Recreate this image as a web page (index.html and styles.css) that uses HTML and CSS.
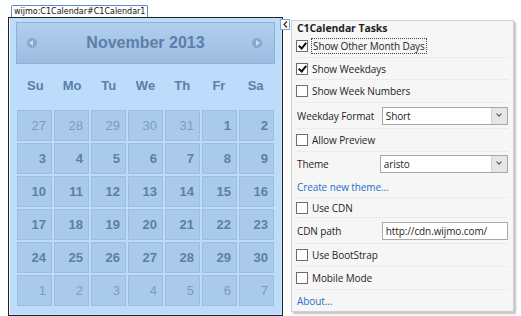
FILE: index.html
```html
<!DOCTYPE html>
<html lang="en">
<head>
    <meta charset="UTF-8">
    <title>C1Calendar Designer</title>
    <link rel="stylesheet" href="styles.css">
</head>
<body>
<div class="stage">
    <div class="designer">
        <div class="tag">wijmo:C1Calendar#C1Calendar1</div>
        <div class="frame">
            <div class="calendar">
                <div class="cal-header">
                    <span class="nav-btn prev"></span>
                    <span class="cal-title">November 2013</span>
                    <span class="nav-btn next"></span>
                </div>
                <div class="weekdays">
                    <span>Su</span><span>Mo</span><span>Tu</span><span>We</span><span>Th</span><span>Fr</span><span>Sa</span>
                </div>
                <div class="days">
                    <span class="other">27</span><span class="other">28</span><span class="other">29</span><span class="other">30</span><span class="other">31</span><span>1</span><span>2</span>
                    <span>3</span><span>4</span><span>5</span><span>6</span><span>7</span><span>8</span><span>9</span>
                    <span>10</span><span>11</span><span>12</span><span>13</span><span>14</span><span>15</span><span>16</span>
                    <span>17</span><span>18</span><span>19</span><span>20</span><span>21</span><span>22</span><span>23</span>
                    <span>24</span><span>25</span><span>26</span><span>27</span><span>28</span><span>29</span><span>30</span>
                    <span class="other">1</span><span class="other">2</span><span class="other">3</span><span class="other">4</span><span class="other">5</span><span class="other">6</span><span class="other">7</span>
                </div>
            </div>
        </div>
    </div>

    <div class="collapse">
        <svg width="5" height="7" viewBox="0 0 5 7"><path d="M4 0.5 L1 3.5 L4 6.5" fill="none" stroke="#333" stroke-width="1.3"/></svg>
    </div>

    <div class="tasks">
        <div class="tasks-title">C1Calendar Tasks</div>
        <div class="task-row">
            <span class="check checked"></span><span class="focused">Show Other Month Days</span>
        </div>
        <div class="task-row short">
            <span class="check checked"></span><span>Show Weekdays</span>
        </div>
        <div class="task-row">
            <span class="check"></span><span>Show Week Numbers</span>
        </div>
        <div class="task-row field">
            <span class="field-label">Weekday Format</span>
            <span class="combo">Short<span class="drop"></span></span>
        </div>
        <div class="task-row">
            <span class="check"></span><span>Allow Preview</span>
        </div>
        <div class="task-row theme-row no-line">
            <span class="field-label">Theme</span>
            <span class="combo theme-combo">aristo<span class="drop"></span></span>
        </div>
        <div class="task-row short">
            <a href="#" class="task-link">Create new theme...</a>
        </div>
        <div class="task-row tight">
            <span class="check"></span><span>Use CDN</span>
        </div>
        <div class="task-row field">
            <span class="field-label">CDN path</span>
            <span class="combo">http://cdn.wijmo.com/</span>
        </div>
        <div class="task-row">
            <span class="check"></span><span>Use BootStrap</span>
        </div>
        <div class="task-row">
            <span class="check"></span><span>Mobile Mode</span>
        </div>
        <div class="task-row short no-line">
            <a href="#" class="task-link">About...</a>
        </div>
    </div>
</div>
</body>
</html>
```

FILE: styles.css
```css
body {
    margin: 0;
    background-color: #fff;
    font-family: "Liberation Sans", Arial, sans-serif;
}

.stage {
    display: flex;
    align-items: flex-start;
    padding: 5px 0 0 8px;
}

/* design-time frame */
.designer {
    width: 275px;
    display: flex;
    flex-direction: column;
}

.tag {
    align-self: flex-start;
    margin-left: 3px;
    height: 11px;
    padding: 0 2px;
    border: 1px solid #5b8ad0;
    border-bottom: none;
    border-radius: 2px 2px 0 0;
    font-family: "DejaVu Sans", sans-serif;
    font-size: 8px;
    line-height: 12px;
    color: #111;
}

.frame {
    height: 296px;
    border: 1px solid #222;
    background-color: #d4e6fa;
    padding: 0 1px 1px 0;
}

.calendar {
    height: 100%;
    box-sizing: border-box;
    background-color: #bddbfa;
    padding: 4px 6px 0 6px;
    border-left: 1px solid #eaf3fd;
}

.cal-header {
    height: 40px;
    display: flex;
    align-items: center;
    justify-content: space-between;
    padding: 0 12px 0 10px;
    border: 1px solid #8fb1d7;
    background: linear-gradient(#b1cfee, #9cbce0);
}

.cal-title {
    font-size: 16px;
    font-weight: bold;
    color: #5b7fa8;
    margin-left: 2px;
}

.nav-btn {
    position: relative;
    width: 10px;
    height: 10px;
    border-radius: 50%;
    background-color: #8ba7c6;
}

.nav-btn::after {
    content: "";
    position: absolute;
    top: 2px;
    border-top: 3px solid transparent;
    border-bottom: 3px solid transparent;
}

.prev::after {
    left: 2px;
    border-right: 4px solid #c9dcf0;
}

.next::after {
    left: 4px;
    border-left: 4px solid #c9dcf0;
}

.weekdays {
    display: grid;
    grid-template-columns: repeat(7, 1fr);
    height: 42px;
    padding: 0 1px 4px 1px;
    align-items: center;
    font-size: 13px;
    font-weight: bold;
    color: #5b7fa8;
    text-align: center;
}

.days {
    display: grid;
    grid-template-columns: repeat(7, 1fr);
    grid-auto-rows: 31px;
    gap: 2px 2px;
    margin: 0 1px;
}

.days span {
    background-color: #aacaec;
    border: 1px solid #9dbee2;
    text-align: right;
    padding-right: 5px;
    line-height: 29px;
    font-size: 13px;
    font-weight: bold;
    color: #5b7fa8;
}

.days span.other {
    font-weight: normal;
    color: #7b9bc2;
}

/* smart tag */
.collapse {
    width: 8px;
    height: 9px;
    margin: 14px 0 0 -3px;
    border: 1px solid #7ea3d6;
    background-color: #fff;
    display: flex;
    align-items: center;
    justify-content: center;
}

.tasks {
    width: 223px;
    height: 292px;
    margin: 15px 0 0 1px;
    border: 1px solid #cfcfcf;
    background-color: #f6f6f6;
    box-shadow: 2px 2px 2px rgba(0, 0, 0, 0.25);
    font-family: "Open Sans", sans-serif;
    font-size: 10px;
    letter-spacing: -0.1px;
    color: #1e1e1e;
    padding: 0 5px 0 4px;
    box-sizing: border-box;
}

.tasks-title {
    font-weight: bold;
    font-size: 10.5px;
    height: 14px;
    line-height: 14px;
    padding-left: 1px;
}

.task-row {
    display: flex;
    align-items: center;
    box-sizing: border-box;
    height: 23px;
    border-bottom: 1px solid #ebebeb;
}

.task-row.short {
    height: 22px;
}

.task-row.tight {
    height: 20px;
}

.task-row.field {
    height: 26px;
}

.task-row.theme-row {
    height: 24px;
}

.task-row.no-line {
    border-bottom: none;
}

.check {
    width: 10px;
    height: 10px;
    border: 1px solid #6d6d6d;
    background-color: #fff;
    margin-right: 4px;
    position: relative;
}

.check.checked::after {
    content: "";
    position: absolute;
    left: 3px;
    top: 0px;
    width: 3px;
    height: 6px;
    border-right: 2px solid #111;
    border-bottom: 2px solid #111;
    transform: rotate(40deg);
}

.focused {
    outline: 1px dotted #444;
    padding: 0 1px;
}

.field-label {
    width: 86px;
    padding-left: 1px;
    white-space: nowrap;
}

.combo {
    position: relative;
    width: 128px;
    height: 18px;
    box-sizing: border-box;
    border: 1px solid #a9a9a9;
    background-color: #fff;
    padding-left: 3px;
    line-height: 16px;
}

.theme-combo {
    margin-left: -2px;
    width: 130px;
}

.drop {
    position: absolute;
    right: 0;
    top: 0;
    width: 15px;
    height: 16px;
    background-color: #e6e6e6;
    border-left: 1px solid #d0d0d0;
}

.drop::after {
    content: "";
    position: absolute;
    left: 5px;
    top: 4px;
    width: 3px;
    height: 3px;
    border-right: 1.5px solid #555;
    border-bottom: 1.5px solid #555;
    transform: rotate(45deg);
}

.task-link {
    color: #1a73c7;
    text-decoration: none;
    padding-left: 1px;
}
```
